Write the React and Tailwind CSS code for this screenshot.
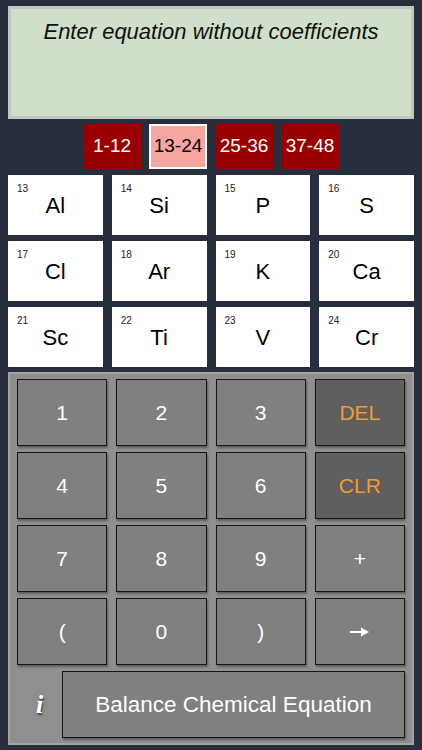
import React from "react";

const elements = [
  [13, "Al"], [14, "Si"], [15, "P"], [16, "S"],
  [17, "Cl"], [18, "Ar"], [19, "K"], [20, "Ca"],
  [21, "Sc"], [22, "Ti"], [23, "V"], [24, "Cr"],
];

const ranges = ["1-12", "13-24", "25-36", "37-48"];

const keys = [
  { label: "1" }, { label: "2" }, { label: "3" }, { label: "DEL", dark: true },
  { label: "4" }, { label: "5" }, { label: "6" }, { label: "CLR", dark: true },
  { label: "7" }, { label: "8" }, { label: "9" }, { label: "+" },
  { label: "(" }, { label: "0" }, { label: ")" }, { label: "arrow" },
];

const Arrow = () => (
  <svg width="19" height="10" viewBox="0 0 19 10">
    <rect x="0" y="4" width="12" height="2" fill="white" />
    <path d="M11 0.5 L19 5 L11 9.5 Z" fill="white" />
  </svg>
);

const App = () => {
  return (
    <div
      className="w-[422px] h-[750px] bg-[#272e3e] px-2 pt-[6px] overflow-hidden"
      style={{ fontFamily: '"Liberation Sans", Arial, sans-serif' }}
    >
      {/* display */}
      <div className="h-[113px] border-[3px] border-[#c5c6c4] bg-[#d0dfc9] pt-[12px] text-center">
        <p className="text-[22px] leading-none italic text-[#111]">Enter equation without coefficients</p>
      </div>

      {/* range tabs */}
      <div className="mt-[5px] flex justify-center gap-2">
        {ranges.map((r) => {
          const active = r === "13-24";
          return (
            <div
              key={r}
              className={
                active
                  ? "w-[58px] h-[45px] flex items-center justify-center bg-[#f5a6a0] border-2 border-white text-[19px] text-black"
                  : "w-[58px] h-[45px] flex items-center justify-center bg-[#990000] text-[19px] text-white"
              }
            >
              {r}
            </div>
          );
        })}
      </div>

      {/* element grid */}
      <div className="mt-[6px] grid grid-cols-4 gap-x-[9px] gap-y-[6px]">
        {elements.map(([n, s]) => (
          <div
            key={n}
            className="relative h-[60px] bg-white flex items-center justify-center"
          >
            <span className="absolute left-[9px] top-[9px] text-[10px] leading-none text-[#222]">
              {n}
            </span>
            <span className="text-[22px] text-black">{s}</span>
          </div>
        ))}
      </div>

      {/* keypad */}
      <div className="mt-[5px] h-[373px] border-2 border-[#a4a4a4] bg-[#8f8f8f] px-[7px] pt-[5px]">
        <div className="grid grid-cols-4 gap-x-[9px] gap-y-[6px]">
          {keys.map((k) => (
            <div
              key={k.label}
              className={
                k.dark
                  ? "h-[67px] flex items-center justify-center border border-[#151515] bg-[#5f5f5f] text-[21px] text-[#f39a2c] shadow-[1px_2px_2px_rgba(0,0,0,0.35)]"
                  : "h-[67px] flex items-center justify-center border border-[#151515] bg-[#808080] text-[21px] text-white shadow-[1px_2px_2px_rgba(0,0,0,0.35)]"
              }
            >
              {k.label === "arrow" ? <Arrow /> : k.label}
            </div>
          ))}
        </div>
        <div className="mt-[6px] flex">
          <div className="w-[45px] h-[67px] flex items-center justify-center">
            <span
              className="text-[26px] font-bold italic text-white [text-shadow:1px_2px_2px_rgba(0,0,0,0.5)]"
              style={{ fontFamily: '"Liberation Serif", serif' }}
            >
              i
            </span>
          </div>
          <div className="flex-1 h-[67px] flex items-center justify-center border border-[#151515] bg-[#808080] text-[22.5px] text-white shadow-[1px_2px_2px_rgba(0,0,0,0.35)]">
            Balance Chemical Equation
          </div>
        </div>
      </div>
    </div>
  );
};

export default App;
